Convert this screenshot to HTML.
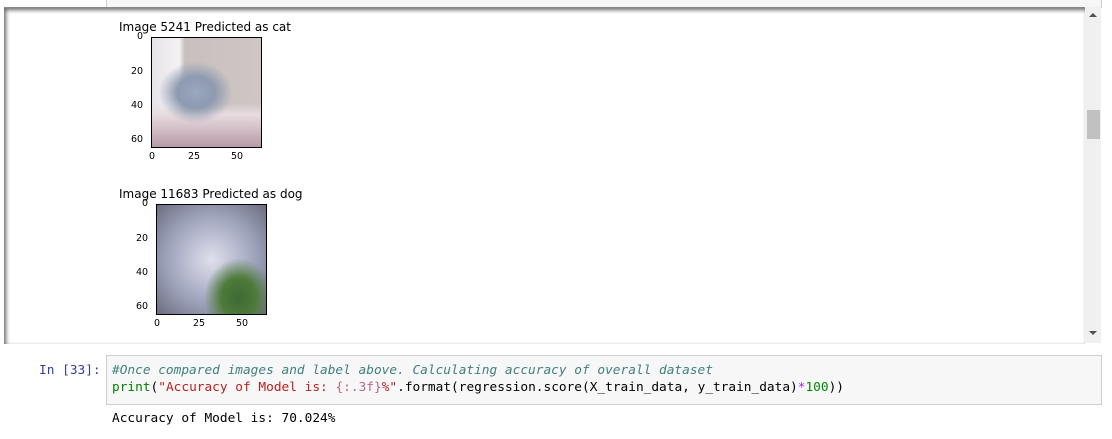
<!DOCTYPE html><html><head><style>
body{margin:0;width:1112px;height:439px;background:#fff;position:relative;overflow:hidden;font-family:"DejaVu Sans","Liberation Sans",sans-serif;}
.a{position:absolute}
.mono{font-family:"DejaVu Sans Mono","Liberation Mono",monospace;font-size:12.8px}
.t{font-size:12px;color:#000}
.tk{font-size:9.5px;color:#000}
</style></head><body>
<div class="a" style="left:106px;top:-2px;width:994px;height:8px;border:1px solid #cfcfcf;background:#f7f7f7"></div>
<div class="a" style="left:4px;top:7px;width:1081px;height:336px;background:#fff;box-shadow:inset 2px 2px 4px rgba(0,0,0,.6);border-top:1px solid #888"></div>
<div class="a" style="left:1085px;top:7px;width:16px;height:336px;background:#f0f0f0"></div>
<div class="a" style="left:1087px;top:110px;width:13px;height:29px;background:#c1c1c1"></div>
<div class="a" style="left:1089px;top:13px;width:0;height:0;border-left:4px solid transparent;border-right:4px solid transparent;border-bottom:4px solid #505050"></div>
<div class="a" style="left:1089px;top:331px;width:0;height:0;border-left:4px solid transparent;border-right:4px solid transparent;border-top:4px solid #505050"></div>

<div class="a t" style="left:119px;top:20px">Image 5241 Predicted as cat</div>
<div class="a" style="left:151px;top:37px;width:109px;height:109px;border:1px solid #000;background:radial-gradient(ellipse at 40% 50%,#9aa8c0 0,#8d9ab0 20%,transparent 40%),linear-gradient(180deg,transparent 60%,#e8dce0 70%,#b89aa8 100%),linear-gradient(90deg,#e6e4e8 0,#f4f2f4 25%,#c9bfbf 30%,#cfc6c4 100%)"></div>
<div class="a tk" style="left:137px;top:31px">0</div>
<div class="a tk" style="left:131px;top:66px">20</div>
<div class="a tk" style="left:131px;top:100px">40</div>
<div class="a tk" style="left:131px;top:134px">60</div>
<div class="a tk" style="left:149px;top:151px">0</div>
<div class="a tk" style="left:188px;top:151px">25</div>
<div class="a tk" style="left:231px;top:151px">50</div>

<div class="a t" style="left:119px;top:187px">Image 11683 Predicted as dog</div>
<div class="a" style="left:156px;top:204px;width:109px;height:109px;border:1px solid #000;background:radial-gradient(ellipse at 75% 85%,#3d6a35 0,#4e7a3a 15%,transparent 30%),radial-gradient(ellipse at 50% 50%,#dfe0ec 0,#b8bbd0 35%,#9aa0b8 60%,#6c6c80 100%)"></div>
<div class="a tk" style="left:142px;top:198px">0</div>
<div class="a tk" style="left:136px;top:233px">20</div>
<div class="a tk" style="left:136px;top:267px">40</div>
<div class="a tk" style="left:136px;top:301px">60</div>
<div class="a tk" style="left:154px;top:318px">0</div>
<div class="a tk" style="left:193px;top:318px">25</div>
<div class="a tk" style="left:236px;top:318px">50</div>

<div class="a mono" style="left:39px;top:363px;color:#303f9f">In [33]:</div>
<div class="a" style="left:106px;top:355px;width:994px;height:48px;border:1px solid #cfcfcf;background:#f7f7f7"></div>
<div class="a mono" style="left:112px;top:363px;color:#408080;font-style:italic;white-space:pre">#Once compared images and label above. Calculating accuracy of overall dataset</div>
<div class="a mono" style="left:112px;top:380px;white-space:pre"><span style="color:#008000">print</span>(<span style="color:#ba2121">"Accuracy of Model is: </span><span style="color:#bb6688">{:.3f}</span><span style="color:#ba2121">%"</span>.format(regression.score(X_train_data, y_train_data)<span style="color:#aa22ff">*</span><span style="color:#080">100</span>))</div>
<div class="a mono" style="left:112px;top:411px;white-space:pre">Accuracy of Model is: 70.024%</div>
</body></html>
